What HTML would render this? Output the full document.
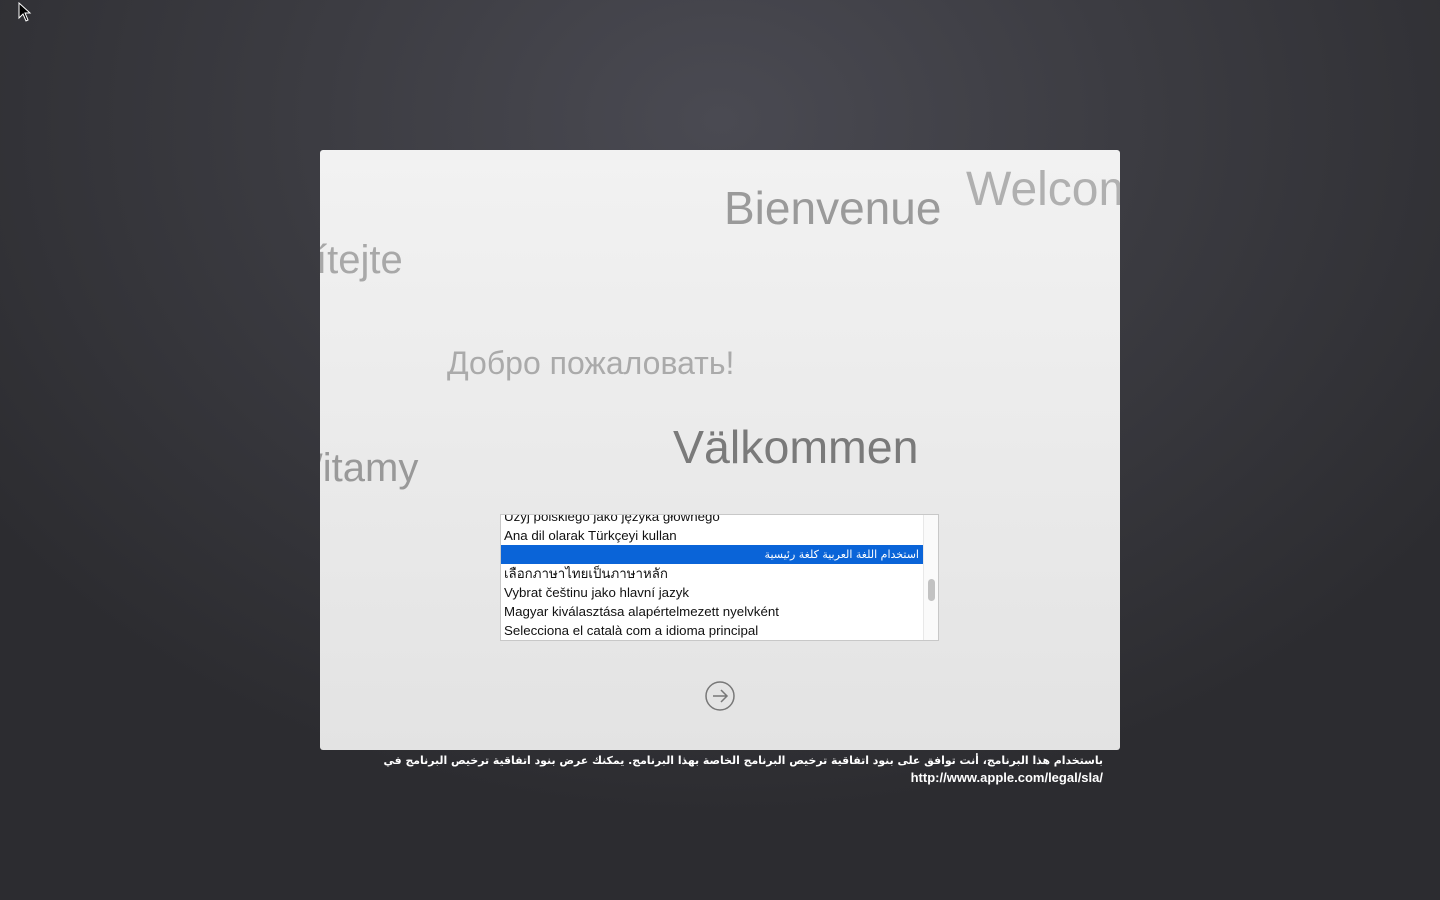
<!DOCTYPE html>
<html><head><meta charset="utf-8"><style>
html,body{margin:0;padding:0;width:1440px;height:900px;overflow:hidden;}
body{background:radial-gradient(ellipse 900px 700px at 720px 120px,#4a4a52 0%,#3c3c42 45%,#2c2c30 100%);font-family:"Liberation Sans","DejaVu Sans",sans-serif;position:relative;}
.win{position:absolute;left:320px;top:150px;width:800px;height:600px;background:linear-gradient(#f2f2f2,#e3e3e3);border-radius:3px;overflow:hidden;}
.w{position:absolute;color:#a8a8a8;white-space:nowrap;}
.list{position:absolute;left:180px;top:364px;width:437px;height:125px;background:#fff;border:1px solid #c8c8c8;overflow:hidden;font-size:13.3px;color:#111;}
.row{height:19px;line-height:19px;padding-left:3px;}
.sel{background:#0a64d8;color:#fff;text-align:right;padding-right:4px;font-family:"DejaVu Sans",sans-serif;font-size:11px;}
.sb{position:absolute;left:422px;top:0;width:15px;height:125px;background:#fafafa;border-left:1px solid #e8e8e8;}
.th{position:absolute;left:4px;top:64px;width:7px;height:22px;border-radius:4px;background:#c2c2c2;}
.legal{position:absolute;left:200px;top:752px;width:903px;text-align:right;color:#fff;font-size:10.9px;line-height:17px;font-family:"DejaVu Sans",sans-serif;font-weight:bold;white-space:nowrap;}
</style></head><body>
<svg style="position:absolute;left:18px;top:2px" width="14" height="20"><path d="M1 1 L1 16 L5 12 L8 19 L10 18 L7 11 L12 11 Z" fill="#000" stroke="#fff" stroke-width="1"/></svg>
<div class="win">
<div class="w" style="left:404px;top:31px;font-size:46px;color:#9a9a9a">Bienvenue</div>
<div class="w" style="left:646px;top:12px;font-size:48px;color:#b0b0b0">Welcome</div>
<div class="w" style="left:-24px;top:88px;font-size:40px">vítejte</div>
<div class="w" style="left:127px;top:195px;font-size:32px;color:#aaa">Добро пожаловать!</div>
<div class="w" style="left:353px;top:270px;font-size:46.5px;color:#7a7a7a">Välkommen</div>
<div class="w" style="left:-35px;top:296px;font-size:40px;color:#999">Witamy</div>
<div class="list">
<div class="row" style="margin-top:-8px">Użyj polskiego jako języka głównego</div>
<div class="row">Ana dil olarak Türkçeyi kullan</div>
<div class="row sel" style="margin-right:15px">استخدام اللغة العربية كلغة رئيسية</div>
<div class="row">เลือกภาษาไทยเป็นภาษาหลัก</div>
<div class="row">Vybrat češtinu jako hlavní jazyk</div>
<div class="row">Magyar kiválasztása alapértelmezett nyelvként</div>
<div class="row">Selecciona el català com a idioma principal</div>
<div class="sb"><div class="th"></div></div>
</div>
<svg style="position:absolute;left:384px;top:530px" width="32" height="32"><circle cx="16" cy="16" r="14" fill="none" stroke="#777" stroke-width="1.5"/><path d="M9 16 H23 M17 10 L23 16 L17 22" fill="none" stroke="#777" stroke-width="1.5"/></svg>
</div>
<div class="legal">باستخدام هذا البرنامج، أنت توافق على بنود اتفاقية ترخيص البرنامج الخاصة بهذا البرنامج. يمكنك عرض بنود اتفاقية ترخيص البرنامج في<br><span style="font-family:'Liberation Sans',sans-serif;font-size:13px">http://www.apple.com/legal/sla/</span></div>
</body></html>
